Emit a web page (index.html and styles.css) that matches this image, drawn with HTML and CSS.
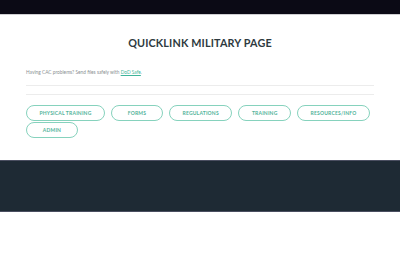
FILE: index.html
```html
<!DOCTYPE html>
<html lang="en">
<head>
  <meta charset="UTF-8">
  <meta name="viewport" content="width=device-width, initial-scale=1.0">
  <title>Quicklink Military Page</title>
  <link rel="stylesheet" href="styles.css">
</head>
<body>
  <header class="topbar"></header>
  <main class="page">
    <h1 class="page-title">QUICKLINK MILITARY PAGE</h1>
    <p class="notice">Having CAC problems? Send files safely with <a href="#">DoD Safe</a>.</p>
    <hr class="rule">
    <hr class="rule">
    <nav class="links">
      <a class="pill" href="#">PHYSICAL TRAINING</a>
      <a class="pill" href="#">FORMS</a>
      <a class="pill" href="#">REGULATIONS</a>
      <a class="pill" href="#">TRAINING</a>
      <a class="pill" href="#">RESOURCES/INFO</a>
      <a class="pill" href="#">ADMIN</a>
    </nav>
  </main>
  <footer class="band"></footer>
</body>
</html>
```

FILE: styles.css
```css
body {
  margin: 0;
  padding: 0;
  font-family: Lato, "Open Sans", sans-serif;
  background: #fff;
  color: #333;
}

.topbar {
  height: 14px;
  background-color: #0b0a15;
  border-bottom: 1px solid #cfcfd2;
}

.page {
  padding: 0 26px;
}

.page-title {
  margin: 0;
  padding-top: 22px;
  height: 18px;
  line-height: 12px;
  text-align: center;
  font-size: 10.8px;
  font-weight: 700;
  color: #2e3a40;
  letter-spacing: 0.15px;
}

.notice {
  margin: 0;
  padding-top: 14px;
  line-height: 7px;
  font-size: 4.8px;
  color: #8a8f92;
}

.notice a {
  color: #3fb59a;
}

.rule {
  margin: 0;
  border: 0;
  border-top: 1px solid #ececec;
}

.notice + .rule {
  margin-top: 9px;
}

.rule + .rule {
  margin-top: 8px;
}

.links {
  display: flex;
  flex-wrap: wrap;
  gap: 1px 6px;
  padding-top: 10px;
}

.pill {
  box-sizing: border-box;
  min-width: 52px;
  height: 16px;
  line-height: 14px;
  padding: 0 12.5px;
  border: 1px solid #86d2bd;
  border-radius: 9px;
  font-size: 5px;
  font-weight: 700;
  letter-spacing: 0.2px;
  color: #52b39a;
  text-decoration: none;
  text-align: center;
}

.band {
  margin-top: 22px;
  height: 50px;
  background-color: #1e2a34;
  border-top: 1px solid #4a4e60;
  border-bottom: 1px solid #4a4e60;
}
```
